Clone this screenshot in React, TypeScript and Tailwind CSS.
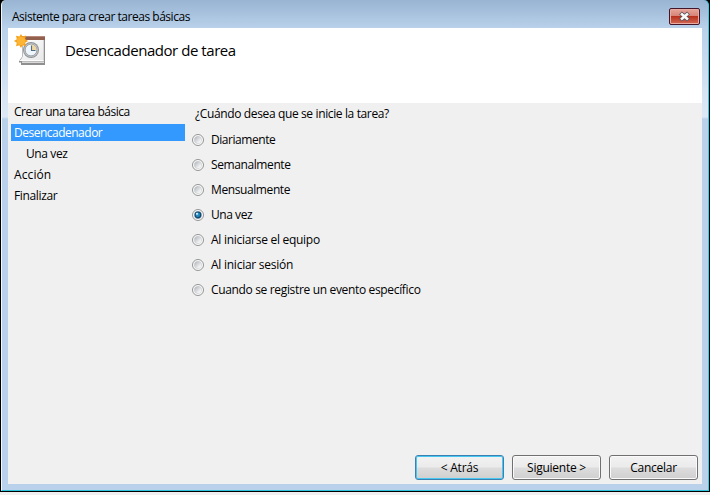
import React from "react";

const STEPS = [
  { label: "Crear una tarea básica", cls: "pl-[3px] tracking-[-0.46px]" },
  { label: "Desencadenador", cls: "pl-[3px] bg-[#3399ff] text-white tracking-[-0.5px]" },
  { label: "Una vez", cls: "pl-[15px] tracking-[-0.4px]" },
  { label: "Acción", cls: "pl-[3px] tracking-[0.1px]" },
  { label: "Finalizar", cls: "pl-[3px] tracking-[-0.35px]" },
];

const OPTIONS = [
  { label: "Diariamente", cls: "tracking-[-0.45px]" },
  { label: "Semanalmente", cls: "tracking-[-0.4px]" },
  { label: "Mensualmente", cls: "tracking-[-0.4px]" },
  { label: "Una vez", cls: "tracking-[-0.45px]" },
  { label: "Al iniciarse el equipo", cls: "tracking-[-0.28px]" },
  { label: "Al iniciar sesión", cls: "tracking-[-0.25px]" },
  { label: "Cuando se registre un evento específico", cls: "tracking-[-0.34px]" },
];

function TaskIcon() {
  return (
    <svg width="32" height="32" viewBox="0 0 32 32" className="block shrink-0">
      <defs>
        <linearGradient id="page" x1="0" y1="0" x2="1" y2="1">
          <stop offset="0" stopColor="#ffffff" />
          <stop offset="1" stopColor="#e8e8e8" />
        </linearGradient>
      </defs>
      <path d="M8 4h23v27H7v-2.500H5V27l3-4z" fill="#8f8f8f" />
      <path d="M8 4h22v25H8z" fill="#bcbcbc" />
      <path d="M9 5h20.500v21.500H6l3-4z" fill="url(#page)" />
      <path d="M5.500 26.500H29.500" stroke="#fdfdfd" />
      <path d="M8 28.500H30" stroke="#d9d9d9" />
      <path d="M8 2h23v4H8z" fill="#94604e" />
      <path d="M8 2.500h23" stroke="#b78878" />
      <circle cx="17" cy="16" r="8" fill="#8d9194" />
      <circle cx="17" cy="16" r="7.100" fill="#c5c9cc" />
      <circle cx="17" cy="16" r="5.900" fill="#eef5fb" stroke="#7d858b" strokeWidth="0.700" />
      <path d="M17 16v-5.500a5.500 5.500 0 0 1 5.500 5.500z" fill="#efd6a0" />
      <path d="M17.500 11.500v5h4" fill="none" stroke="#4d6c87" strokeWidth="1.100" />
      <path d="M7 0l1.500 2.600L12 1.500l-.9 3.500L14 7l-2.900 1.700.9 3.500-3.500-.9L7 14l-1.700-2.700-3.300.9.800-3.500L0 7l2.800-1.800L2 1.700l3.400.9z" fill="#f5a31c" />
      <circle cx="7" cy="7" r="4" fill="#ffb534" />
    </svg>
  );
}

function Radio({ checked }: { checked: boolean }) {
  return (
    <svg width="12" height="12" viewBox="0 0 12 12" className="block shrink-0">
      <defs>
        <linearGradient id="well" x1="0" y1="0" x2="1" y2="1">
          <stop offset="0.100" stopColor="#b4b9bf" />
          <stop offset="0.800" stopColor="#fafafa" />
        </linearGradient>
      </defs>
      <circle cx="6" cy="6" r="5.500" fill="#fbfbfb" stroke="#939494" />
      <circle cx="6" cy="6" r="3.700" fill="url(#well)" stroke={checked ? "#7b98ac" : "#c3c6c9"} strokeWidth="0.500" />
      {checked && (
        <>
          <circle cx="6" cy="6" r="3.400" fill="#174a70" />
          <circle cx="5.800" cy="5.700" r="2.200" fill="#258fc4" />
          <circle cx="5" cy="4.800" r="1.100" fill="#c8effc" />
        </>
      )}
    </svg>
  );
}

function WizardButton({ label, primary = false }: { label: string; primary?: boolean }) {
  return (
    <button
      className={
        "flex h-[25px] w-[89px] items-center justify-center rounded-[3px] border bg-[linear-gradient(180deg,#f2f2f2_0%,#ebebeb_49%,#dddddd_51%,#cfcfcf_100%)] tracking-[-0.25px] " +
        (primary
          ? "border-[#3c7fb1] shadow-[inset_0_0_0_1px_#48c8f0]"
          : "border-[#707070] shadow-[inset_0_0_0_1px_#fafafa]")
      }
    >
      {label}
    </button>
  );
}

export default function App() {
  return (
    <div className="h-[495px] w-[710px] overflow-hidden bg-[#f0f0f0] font-['Open_Sans','Noto_Sans',sans-serif] text-[12px] leading-[17px] text-black">
      <div className="h-[492px] border-x border-b border-black bg-black">
        <div className="flex h-[491px] flex-col rounded-t-[5px] border-x border-b border-b-[#2cc3dc] border-l-[#f1f8fd] border-r-[#2cd0ea] bg-[linear-gradient(180deg,#98b4d2_0px,#b9d1ea_28px,#d5e3f3_90px,#dce8f5_117px,#b9d1ea_119px)] px-[6px]">
          <header className="flex h-[28px] shrink-0 items-start justify-between pl-[4px] pr-[2px] pt-[8px]">
            <h1 className="tracking-[-0.47px]">Asistente para crear tareas básicas</h1>
            <button className="flex h-[17px] w-[31px] items-center justify-center rounded-[2px] border border-[#431729] bg-[linear-gradient(180deg,#e7a69b_0%,#d78377_45%,#b8321e_50%,#d36a55_100%)] shadow-[inset_0_0_0_1px_#e9aca2]">
              <svg width="13" height="11" viewBox="0 0 13 11">
                <path d="M2.500 2l8 7M10.500 2l-8 7" stroke="#54505c" strokeWidth="4.200" />
                <path d="M3 2.500l7 6M10 2.500l-7 6" stroke="#f8f8f8" strokeWidth="2.600" />
              </svg>
            </button>
          </header>
          <section className="flex h-[75px] shrink-0 bg-white pl-[6px] pt-[6px]">
            <TaskIcon />
            <h2 className="ml-[19px] mt-[5px] text-[15px] leading-[22px] tracking-[-0.45px]">Desencadenador de tarea</h2>
          </section>
          <main className="flex h-[345px] shrink-0 bg-[#f0f0f0] pl-[3px]">
            <nav className="flex w-[174px] shrink-0 flex-col gap-[4px]">
              {STEPS.map((s) => (
                <div key={s.label} className={"h-[17px] " + s.cls}>{s.label}</div>
              ))}
            </nav>
            <section className="pl-[7px] pt-[2px]">
              <p className="pl-[3px] tracking-[-0.37px]">¿Cuándo desea que se inicie la tarea?</p>
              <div className="mt-[5px]">
                {OPTIONS.map((o, i) => (
                  <label key={o.label} className="flex h-[25px] items-center gap-[7px]">
                    <Radio checked={i === 3} />
                    <span className={o.cls}>{o.label}</span>
                  </label>
                ))}
              </div>
            </section>
          </main>
          <footer className="flex h-[36px] shrink-0 justify-end gap-[8px] bg-[#f0f0f0] pr-[4px] pt-[7px]">
            <WizardButton label="< Atrás" primary />
            <WizardButton label="Siguiente >" />
            <WizardButton label="Cancelar" />
          </footer>
        </div>
      </div>
    </div>
  );
}
